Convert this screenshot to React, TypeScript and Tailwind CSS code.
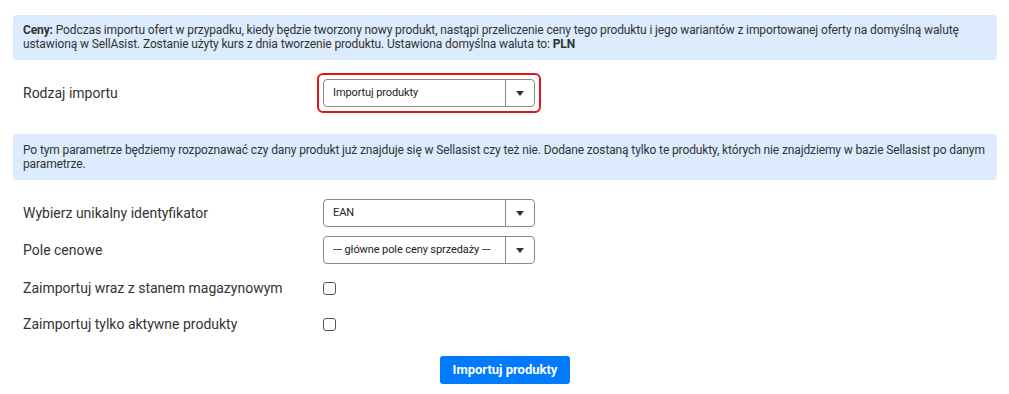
import React from "react";

function Select({ value }: { value: string }) {
  return (
    <div className="flex h-[28px] w-[212px] items-stretch rounded-[4px] border border-[#8a8a8a] bg-white">
      <div className="flex flex-1 items-center truncate pl-[9px] text-[11px] tracking-[-0.1px] text-[#222]">{value}</div>
      <div className="flex w-[29px] items-center justify-center border-l border-[#8a8a8a]">
        <svg width="8" height="5" viewBox="0 0 8 5">
          <path d="M0 0h8L4 5z" fill="#333" />
        </svg>
      </div>
    </div>
  );
}

function Row({ label, children }: { label: string; children: React.ReactNode }) {
  return (
    <div className="flex items-center px-[10px]">
      <div className="w-[300px] text-[14px] text-[#333]">{label}</div>
      {children}
    </div>
  );
}

function Checkbox() {
  return <div className="h-[13px] w-[13px] rounded-[3px] border border-[#555] bg-white" />;
}

export default function App() {
  return (
    <div className="h-[394px] w-[1009px] bg-white pl-[13px] pr-[12px] pt-[15px] font-['Roboto',sans-serif]">
      <div className="rounded-[4px] bg-[#dcebfd] px-[10px] pt-[8px] pb-[9px] text-[12px] leading-[14px] tracking-[-0.12px] text-[#333]">
        <b>Ceny:</b> Podczas importu ofert w przypadku, kiedy będzie tworzony nowy produkt, nastąpi przeliczenie ceny tego produktu i jego wariantów z importowanej oferty na domyślną walutę
        ustawioną w SellAsist. Zostanie użyty kurs z dnia tworzenie produktu. Ustawiona domyślna waluta to: <b>PLN</b>
      </div>

      <div className="mt-[13px]">
        <Row label="Rodzaj importu">
          <div className="-ml-[6px] rounded-[6px] border-2 border-[#e5141b] p-[4px]">
            <Select value="Importuj produkty" />
          </div>
        </Row>
      </div>

      <div className="mt-[21px] rounded-[4px] bg-[#dcebfd] px-[10px] pt-[9px] pb-[9px] text-[12px] leading-[14px] tracking-[-0.12px] text-[#333]">
        Po tym parametrze będziemy rozpoznawać czy dany produkt już znajduje się w Sellasist czy też nie. Dodane zostaną tylko te produkty, których nie znajdziemy w bazie Sellasist po danym parametrze.
      </div>

      <div className="mt-[19px] flex flex-col gap-[9px]">
        <Row label="Wybierz unikalny identyfikator">
          <Select value="EAN" />
        </Row>
        <Row label="Pole cenowe">
          <Select value="--- główne pole ceny sprzedaży ---" />
        </Row>
      </div>

      <div className="mt-[6px] flex flex-col">
        <div className="flex h-[36px] items-center">
          <Row label="Zaimportuj wraz z stanem magazynowym">
            <Checkbox />
          </Row>
        </div>
        <div className="flex h-[36px] items-center">
          <Row label="Zaimportuj tylko aktywne produkty">
            <Checkbox />
          </Row>
        </div>
      </div>

      <div className="mt-[14px] flex justify-center">
        <button className="h-[28px] w-[130px] rounded-[3px] bg-[#007bff] text-[13px] font-bold text-white">
          Importuj produkty
        </button>
      </div>
    </div>
  );
}
